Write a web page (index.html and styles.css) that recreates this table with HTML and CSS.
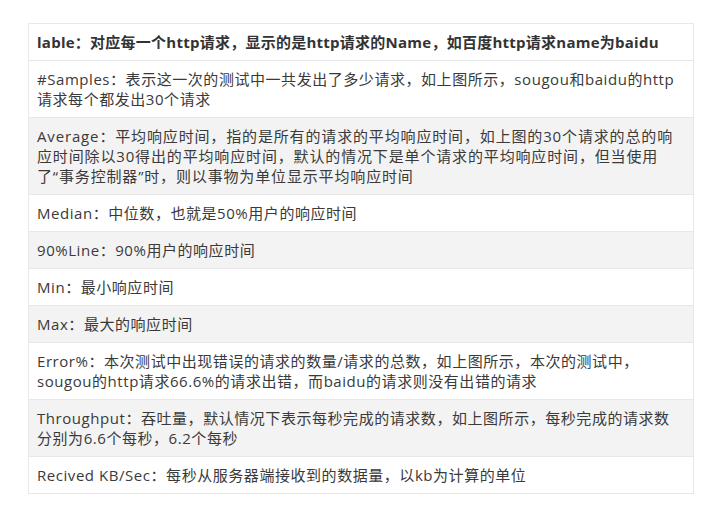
FILE: index.html
```html
<!DOCTYPE html>
<html lang="zh-CN">
<head>
<meta charset="utf-8">
<link rel="stylesheet" href="styles.css">
</head>
<body>
<div class="page">
<table class="info">
<thead>
<tr><th>lable：对应每一个http请求，显示的是http请求的Name，如百度http请求name为baidu</th></tr>
</thead>
<tbody>
<tr><td>#Samples：表示这一次的测试中一共发出了多少请求，如上图所示，sougou和baidu的http请求每个都发出30个请求</td></tr>
<tr class="loose"><td>Average：平均响应时间，指的是所有的请求的平均响应时间，如上图的30个请求的总的响应时间除以30得出的平均响应时间，默认的情况下是单个请求的平均响应时间，但当使用<span class="keep">了“事务</span>控制器”时，则以事物为单位显示平均响应时间</td></tr>
<tr><td>Median：中位数，也就是50%用户的响应时间</td></tr>
<tr><td>90%Line：90%用户的响应时间</td></tr>
<tr><td>Min：最小响应时间</td></tr>
<tr><td>Max：最大的响应时间</td></tr>
<tr><td>Error%：本次测试中出现错误的请求的数量/请求的总数，如上图所示，本次的测试中，sougou的http请求66.6%的请求出错，而baidu的请求则没有出错的请求</td></tr>
<tr><td>Throughput：吞吐量，默认情况下表示每秒完成的请求数，如上图所示，每秒完成的请求数分别为6.6个每秒，6.2个每秒</td></tr>
<tr><td>Recived KB/Sec：每秒从服务器端接收到的数据量，以kb为计算的单位</td></tr>
</tbody>
</table>
</div>
</body>
</html>
```
FILE: styles.css
```css
html, body {
  margin: 0;
  padding: 0;
  background: #ffffff;
}
.page {
  padding: 23px 0 0 28px;
}
.info {
  border-collapse: collapse;
  width: 666px;
  font-family: "Open Sans", "Noto Sans CJK SC", sans-serif;
  font-size: 15px;
  letter-spacing: 0.55px;
  line-height: 20px;
  color: #3a3a3a;
}
.info th,
.info td {
  border: 1px solid #e8e8e8;
  padding: 8px 11px 8px 8px;
  text-align: left;
  vertical-align: top;
}
.info th {
  font-weight: bold;
  letter-spacing: 0.25px;
  color: #333333;
}
.info tbody tr:nth-child(even) {
  background: #f3f3f3;
}
.info tr.loose td {
  letter-spacing: 0.85px;
  padding-right: 16px;
}
.keep {
  white-space: nowrap;
}
```
